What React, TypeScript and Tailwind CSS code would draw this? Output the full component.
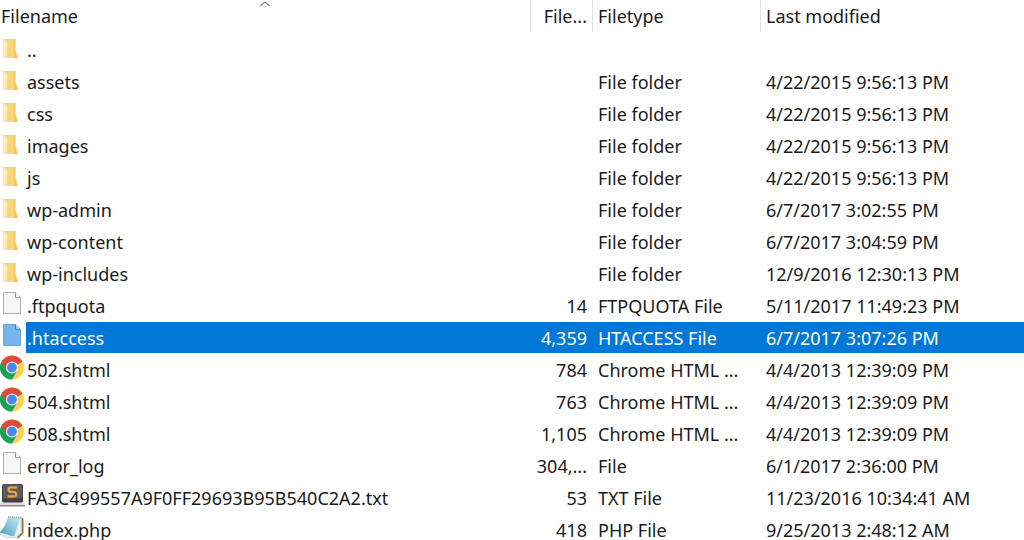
import clsx from "clsx";

type IconKind = "folder" | "file" | "chrome" | "sublime" | "notepad";

interface Entry {
  icon: IconKind;
  name: string;
  size?: string;
  type?: string;
  modified?: string;
}

const ENTRIES: Entry[] = [
  { icon: "folder", name: ".." },
  { icon: "folder", name: "assets", type: "File folder", modified: "4/22/2015 9:56:13 PM" },
  { icon: "folder", name: "css", type: "File folder", modified: "4/22/2015 9:56:13 PM" },
  { icon: "folder", name: "images", type: "File folder", modified: "4/22/2015 9:56:13 PM" },
  { icon: "folder", name: "js", type: "File folder", modified: "4/22/2015 9:56:13 PM" },
  { icon: "folder", name: "wp-admin", type: "File folder", modified: "6/7/2017 3:02:55 PM" },
  { icon: "folder", name: "wp-content", type: "File folder", modified: "6/7/2017 3:04:59 PM" },
  { icon: "folder", name: "wp-includes", type: "File folder", modified: "12/9/2016 12:30:13 PM" },
  { icon: "file", name: ".ftpquota", size: "14", type: "FTPQUOTA File", modified: "5/11/2017 11:49:23 PM" },
  { icon: "file", name: ".htaccess", size: "4,359", type: "HTACCESS File", modified: "6/7/2017 3:07:26 PM" },
  { icon: "chrome", name: "502.shtml", size: "784", type: "Chrome HTML ...", modified: "4/4/2013 12:39:09 PM" },
  { icon: "chrome", name: "504.shtml", size: "763", type: "Chrome HTML ...", modified: "4/4/2013 12:39:09 PM" },
  { icon: "chrome", name: "508.shtml", size: "1,105", type: "Chrome HTML ...", modified: "4/4/2013 12:39:09 PM" },
  { icon: "file", name: "error_log", size: "304,...", type: "File", modified: "6/1/2017 2:36:00 PM" },
  { icon: "sublime", name: "FA3C499557A9F0FF29693B95B540C2A2.txt", size: "53", type: "TXT File", modified: "11/23/2016 10:34:41 AM" },
  { icon: "notepad", name: "index.php", size: "418", type: "PHP File", modified: "9/25/2013 2:48:12 AM" },
];

const SELECTED = ".htaccess";

function FolderIcon() {
  return (
    <svg viewBox="0 0 25 26" className="h-[26px] w-[25px]" aria-hidden="true">
      <path d="M3.5 4H15.5v11l2.5 8H5L3 22z" fill="#f6d67c" />
      <path d="M3 4.5l4 1.5v17l-4-1.5z" fill="#fdeab2" />
      <path d="M13 4h2.5v11l2.5 8h-4z" fill="#f1cb69" />
    </svg>
  );
}

function FileIcon({ selected }: { selected: boolean }) {
  return (
    <svg viewBox="0 0 25 26" className="h-[26px] w-[25px]" aria-hidden="true">
      <path
        d="M3.5 1.5h12l5 5v16h-17z"
        fill={selected ? "#76b5ea" : "#f6f7f8"}
        stroke={selected ? "#68a9de" : "#b0b0b0"}
      />
      <path
        d="M15.5 1.5v5h5"
        fill={selected ? "#a8d1f4" : "#ffffff"}
        stroke={selected ? "#4a86b8" : "#9a9a9a"}
      />
    </svg>
  );
}

function ChromeIcon() {
  return (
    <svg viewBox="0 0 25 26" className="h-[26px] w-[25px]" aria-hidden="true">
      <circle cx="12" cy="12.5" r="12" fill="#fdd04e" />
      <path d="M12 12.5L1.6 6.5A12 12 0 0 1 22.4 6.5z" fill="#dc4b3e" />
      <path d="M12 6.5h10.4L12 12.5z" fill="#dc4b3e" />
      <path d="M1.6 6.5A12 12 0 0 0 12 24.5l5.2-9L12 12.5l-5.2 3z" fill="#1ba15f" />
      <path d="M1.6 6.5L6.8 15.5 12 12.5V6.5z" fill="#dc4b3e" />
      <circle cx="12" cy="12.5" r="6" fill="#f4f4f4" />
      <circle cx="12" cy="12.5" r="4.8" fill="#4587f3" />
    </svg>
  );
}

function SublimeIcon() {
  return (
    <svg viewBox="0 0 25 26" className="h-[26px] w-[25px]" aria-hidden="true">
      <path d="M2 16h21l2 5v2H0v-2z" fill="#dcdcdc" />
      <path d="M0 22h25v1.5H0z" fill="#8b8b8b" />
      <rect x="2" y="1" width="21" height="18.5" rx="2" fill="#3f4143" />
      <rect x="3" y="1.5" width="19" height="14" rx="1.5" fill="#5b5c5e" />
      <path
        d="M16 5.6V4.5H10Q8.6 4.5 8.6 6V7.2Q8.6 8.4 10 8.6L14.5 9.2Q16 9.4 16 10.7V12Q16 13.4 14.5 13.4H8.6V12.2"
        fill="none"
        stroke="#f5a13d"
        strokeWidth="2.2"
      />
    </svg>
  );
}

function NotepadIcon() {
  return (
    <svg viewBox="0 0 25 26" className="h-[26px] w-[25px]" aria-hidden="true">
      <defs>
        <linearGradient id="notepad-page" x1="1" y1="0" x2="0" y2="1">
          <stop offset="0" stopColor="#c5e8f1" />
          <stop offset="0.55" stopColor="#83c5db" />
          <stop offset="1" stopColor="#4798b8" />
        </linearGradient>
      </defs>
      <path d="M21 2l2.5 1.5v14.5l-5 5.5-3-2z" fill="#8b744f" />
      <path d="M20 2h1.6v15.5l-5 5H6l-6-3v-3z" fill="#e8eef0" stroke="#b4bfc3" strokeWidth="0.6" />
      <path d="M8 2l12.5 1-6.5 18.5L0 17.5Q5.5 11 8 2z" fill="url(#notepad-page)" />
      <path d="M8 1.8l13 1" stroke="#a3adb0" strokeWidth="1.4" strokeDasharray="1.2 0.8" />
    </svg>
  );
}

function EntryIcon({ kind, selected }: { kind: IconKind; selected: boolean }) {
  if (kind === "folder") return <FolderIcon />;
  if (kind === "chrome") return <ChromeIcon />;
  if (kind === "sublime") return <SublimeIcon />;
  if (kind === "notepad") return <NotepadIcon />;
  return <FileIcon selected={selected} />;
}

function HeaderCell({ label, sorted, className }: { label: string; sorted?: boolean; className?: string }) {
  return (
    <th
      scope="col"
      aria-sort={sorted ? "ascending" : undefined}
      className="relative h-[34px] p-0 pb-[2px] font-normal"
    >
      <button type="button" className={clsx("block h-8 w-full truncate", className)}>
        {label}
      </button>
      {sorted && (
        <svg viewBox="0 0 12 7" className="absolute top-0 left-1/2 h-[7px] w-3 -translate-x-1/2" aria-hidden="true">
          <path d="M1 6l5-4 5 4" fill="none" stroke="#858585" strokeWidth="1.3" />
        </svg>
      )}
    </th>
  );
}

function EntryRow({ entry }: { entry: Entry }) {
  const selected = entry.name === SELECTED;
  const fill = selected && "bg-[#0078d7] text-white";

  return (
    <tr className="h-8" aria-selected={selected}>
      <td className="p-0">
        <div className="flex h-8 items-start">
          <span className="w-[26px] shrink-0 pt-px">
            <EntryIcon kind={entry.icon} selected={selected} />
          </span>
          <span className={clsx("h-[31px] flex-1 truncate pl-px", fill)}>{entry.name}</span>
        </div>
      </td>
      <td className="p-0 align-top">
        <div className={clsx("h-[31px] pr-[5px] text-right", fill)}>{entry.size}</div>
      </td>
      <td className="p-0 align-top">
        <div className={clsx("h-[31px] truncate pl-[6px]", fill)}>{entry.type}</div>
      </td>
      <td className="p-0 align-top">
        <div className={clsx("h-[31px] truncate pl-[6px]", fill)}>{entry.modified}</div>
      </td>
    </tr>
  );
}

export default function App() {
  return (
    <main className="min-h-screen bg-white font-['Noto_Sans','Open_Sans',sans-serif] text-[18px] leading-[32px] text-[#1a1a1a]">
      <table className="w-full table-fixed border-separate border-spacing-0">
        <colgroup>
          <col />
          <col className="w-[62px]" />
          <col className="w-[168px]" />
          <col className="w-[264px]" />
        </colgroup>
        <thead>
          <tr>
            <HeaderCell label="Filename" sorted className="pl-px text-left" />
            <HeaderCell label="File..." className="border-l border-[#e2e2e2] pr-[5px] text-right" />
            <HeaderCell label="Filetype" className="border-l border-[#e2e2e2] pl-[5px] text-left" />
            <HeaderCell label="Last modified" className="border-l border-[#e2e2e2] pl-[5px] text-left" />
          </tr>
        </thead>
        <tbody>
          {ENTRIES.map((entry) => (
            <EntryRow key={entry.name} entry={entry} />
          ))}
        </tbody>
      </table>
    </main>
  );
}
